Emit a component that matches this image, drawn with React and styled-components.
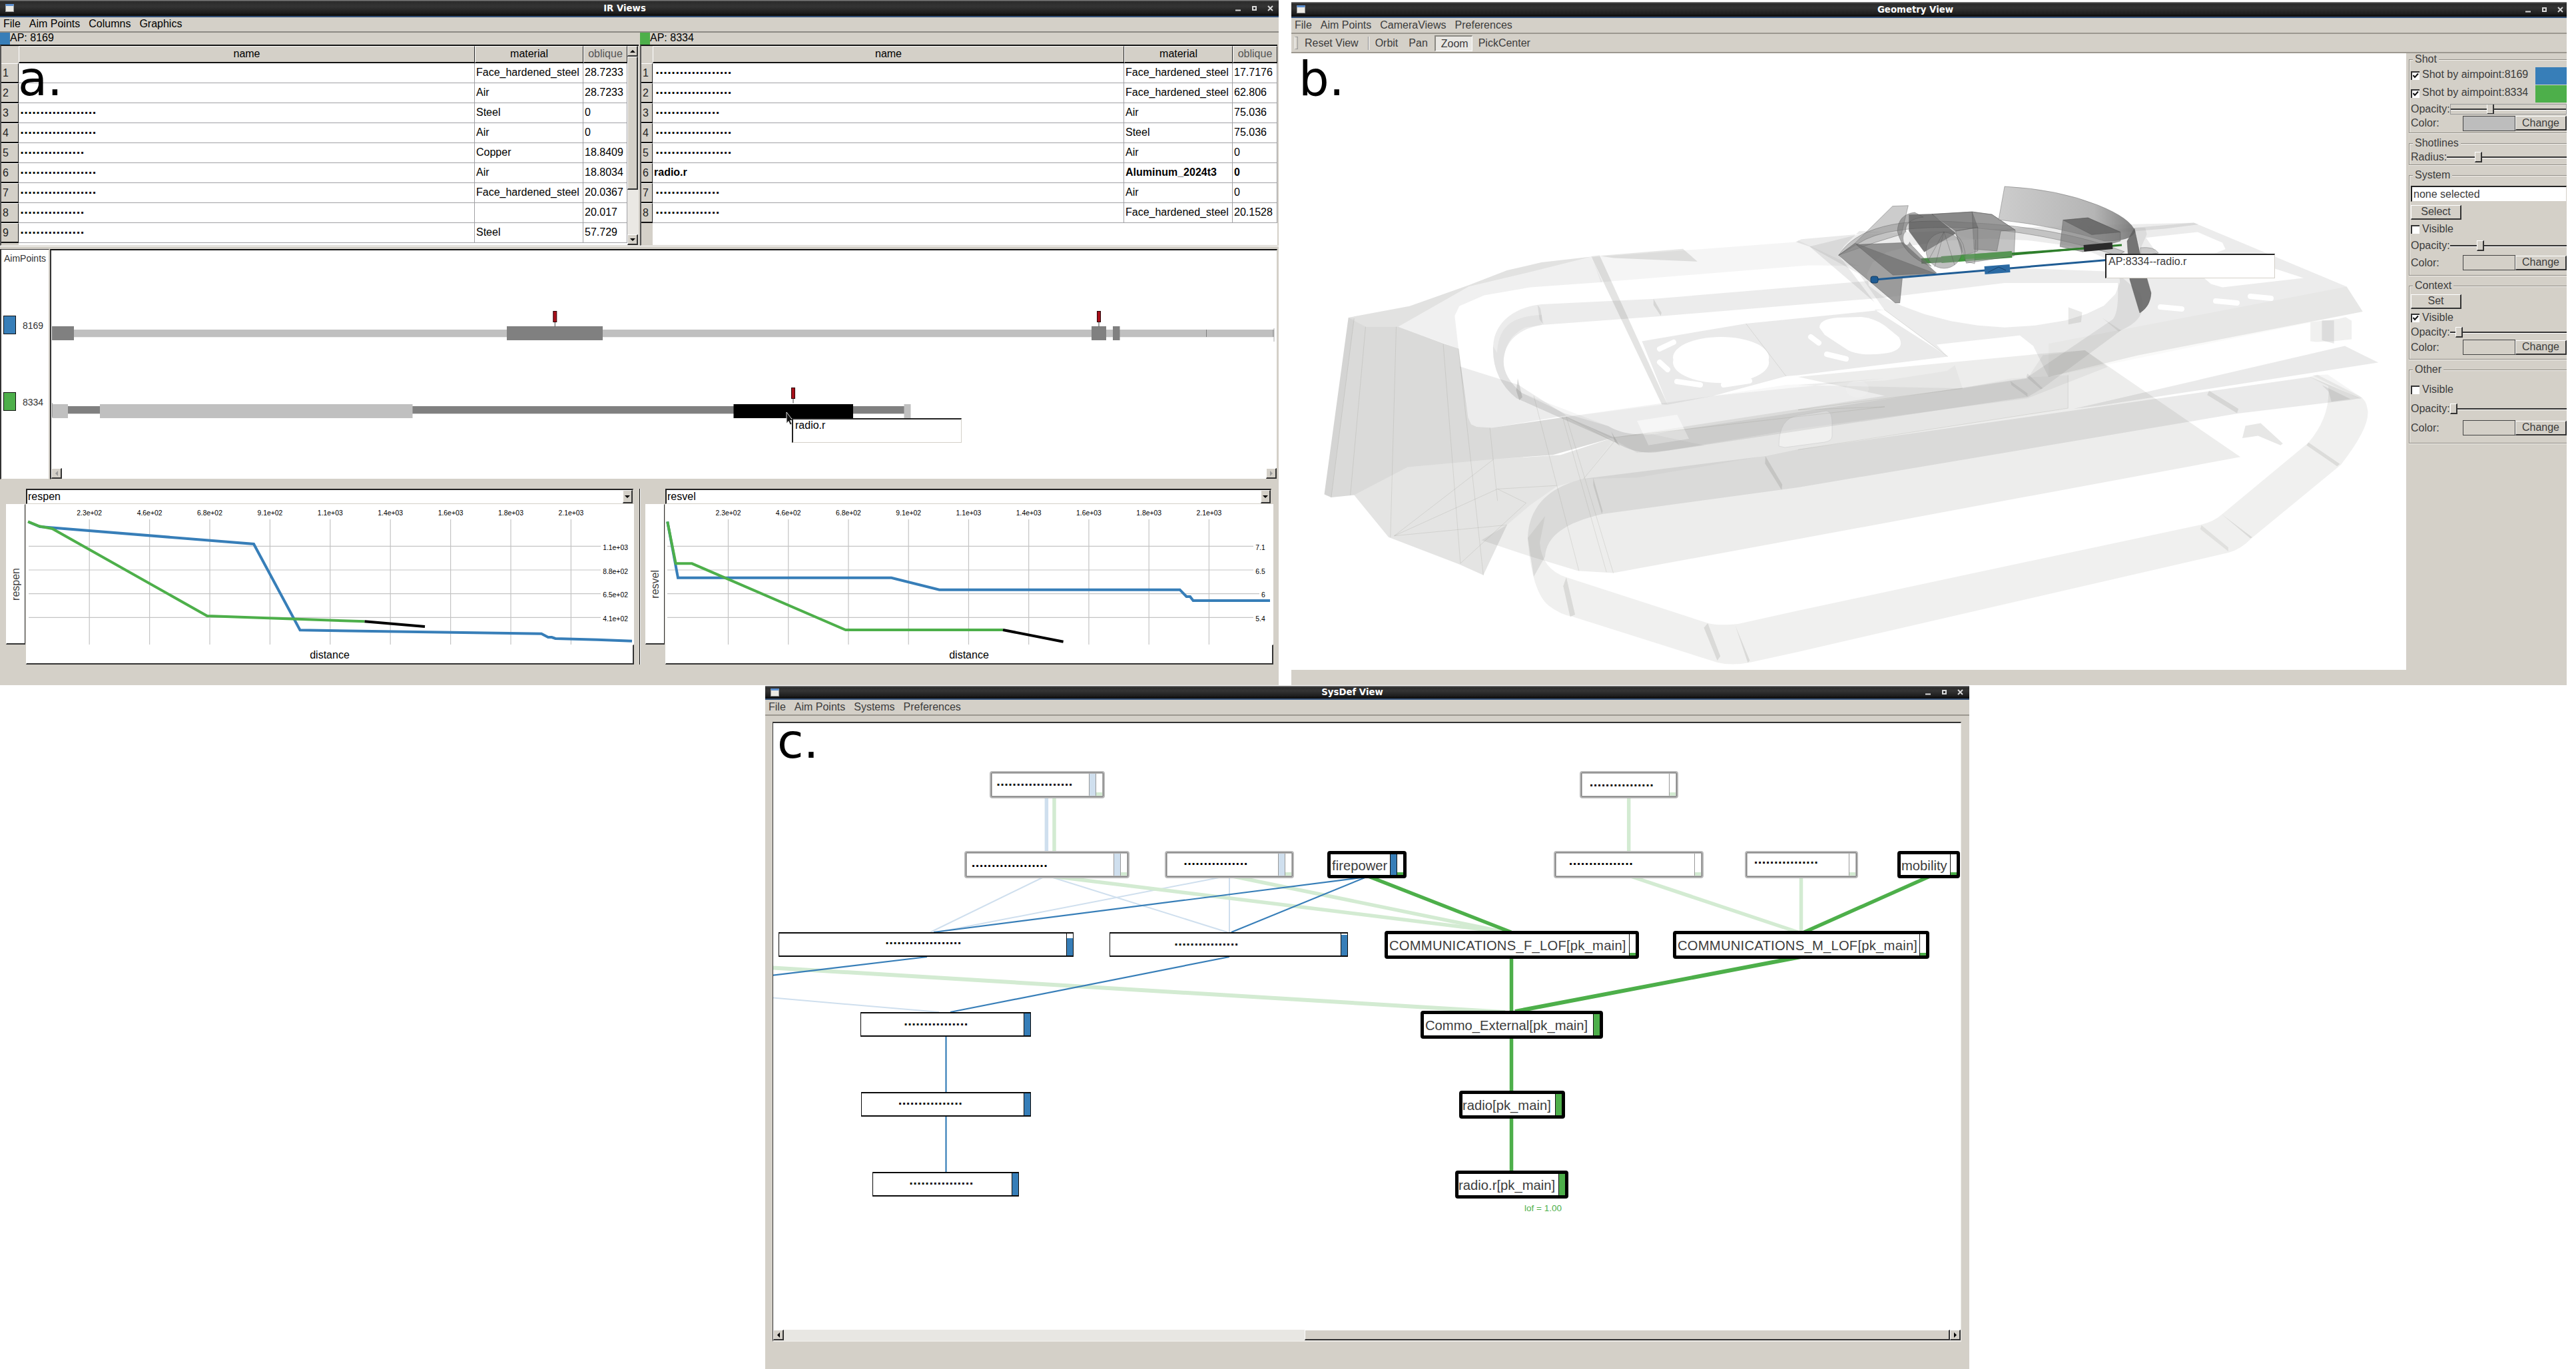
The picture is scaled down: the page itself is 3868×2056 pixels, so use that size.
import React from "react";
import styled, { createGlobalStyle, css } from "styled-components";

const BLUE = "#377eb8";
const GREEN = "#4daf4a";
const FACE = "#d4d0c8";
const SANS = '"Liberation Sans", Arial, sans-serif';
const DEJAVU = '"DejaVu Sans", sans-serif';

const Global = createGlobalStyle`
  *, *::before, *::after { box-sizing: border-box; }
  body { margin: 0; background: #fff; }
`;

const raised = css`
  border-style: solid;
  border-width: 1px 2px 2px 1px;
  border-color: #fff #333 #333 #fff;
`;
const sunken = css`
  border-style: solid;
  border-width: 2px 1px 1px 2px;
  border-color: #222 ${FACE} ${FACE} #222;
`;

/* ---------- window chrome ---------- */

const Desktop = styled.main`
  position: relative;
  width: 3868px;
  height: 2056px;
  overflow: hidden;
  background: #fff;
  font: 16px ${SANS};
  color: #000;
  white-space: nowrap;
`;

const Window = styled.section`
  position: absolute;
  left: ${(p) => p.$x}px;
  top: ${(p) => p.$y}px;
  width: ${(p) => p.$w}px;
  height: ${(p) => p.$h}px;
  display: flex;
  flex-direction: column;
  background: ${FACE};
  color: ${(p) => p.$ink || "#000"};
`;

const TitleBar = styled.header`
  flex: none;
  height: ${(p) => p.$h}px;
  display: grid;
  grid-template-columns: 1fr auto 1fr;
  align-items: center;
  padding: 0 ${(p) => p.$padRight}px 0 8px;
  background: linear-gradient(#777 0, #777 1px, #2b2b2b 2px, #343434 40%, #1c1c1c 84%, #111 88%);
  border-bottom: 2px solid #34527a;
  color: #fff;
  font: bold 13.3px ${DEJAVU};
`;

const TitleText = styled.span`
  margin-right: 44px;
`;

const AppIcon = styled.i`
  width: 13px;
  height: 12px;
  background: #eceae4;
  border: 1px solid #999;
  border-top: 3px solid #5b8fd0;
`;

const Controls = styled.div`
  display: flex;
  justify-content: flex-end;
  gap: 15px;
`;

const Glyph = ({ d }) => (
  <svg width="9" height="9" viewBox="0 0 9 9" fill="none" stroke="#d8d8d8" strokeWidth="2">
    <path d={d} />
  </svg>
);

const Title = ({ text, h = 26, padRight = 9 }) => (
  <TitleBar $h={h} $padRight={padRight}>
    <AppIcon />
    <TitleText>{text}</TitleText>
    <Controls>
      <Glyph d="M0 7.5H8" />
      <Glyph d="M2 2H7V7H2Z" />
      <Glyph d="M1 1L8 8M8 1L1 8" />
    </Controls>
  </TitleBar>
);

const MenuBar = styled.nav`
  flex: none;
  height: ${(p) => p.$h}px;
  display: flex;
  align-items: center;
  gap: 13px;
  padding: 0 0 ${(p) => p.$lift || 0}px 5px;
  border-bottom: 2px solid ${(p) => p.$line || "#8c8a84"};
`;

const Menu = ({ items, ...rest }) => (
  <MenuBar {...rest}>
    {items.map((m) => (
      <span key={m}>{m}</span>
    ))}
  </MenuBar>
);

const FigureLabel = styled.span`
  position: absolute;
  left: ${(p) => p.$x}px;
  top: ${(p) => p.$y}px;
  font: 72px/84px ${DEJAVU};
  color: #000;
`;

const Dots = styled.span`
  font: bold 16px/20px ${DEJAVU};
  letter-spacing: -0.05px;
  color: #000;
`;
const dots = (n) => ".".repeat(n);

/* ---------- IR Views: tables ---------- */

const Tables = styled.div`
  flex: none;
  height: 321px;
  display: grid;
  grid-template-columns: 959px 957px;
  grid-template-rows: minmax(0, 1fr);
  column-gap: 2px;
  border-bottom: 1px solid #fff;
`;

const TablePane = styled.div`
  display: flex;
  flex-direction: column;
  min-width: 0;
  min-height: 0;
`;

const ApLine = styled.div`
  flex: none;
  height: 18px;
  display: flex;
  line-height: 16px;
`;

const ApSwatch = styled.i`
  width: 15px;
  background: ${(p) => p.$c};
`;

const TableFrame = styled.div`
  flex: 1;
  min-height: 0;
  display: flex;
  overflow: hidden;
  background: #fff;
  border-top: 2px solid #111;
  border-left: 2px solid #555;
  border-bottom: 1px solid ${FACE};
`;

const Grid = styled.div`
  flex: 1;
  display: grid;
  align-content: start;
  grid-template-columns: ${(p) => p.$cols};
  grid-template-rows: 26px;
  grid-auto-rows: 30px;
`;

const HeadCell = styled.div`
  background: ${FACE};
  border: solid;
  border-width: 1px 1px 2px 1px;
  border-color: #fff #222 #111 #fff;
  text-align: center;
  line-height: 22px;
  color: ${(p) => (p.$dim ? "#555" : "#000")};
`;

const IndexCell = styled.div`
  background: ${FACE};
  border: solid;
  border-width: 1px 1px 2px 0;
  border-color: #fff #222 #111 #fff;
  line-height: 27px;
  padding-left: 2px;
  color: #222;
`;

const Cell = styled.div`
  border-right: 1px solid #a0a0a4;
  border-bottom: 1px solid #a0a0a4;
  padding-left: 2px;
  line-height: 27px;
  font-weight: ${(p) => (p.$bold ? "bold" : "normal")};
  overflow: hidden;

  ${Dots} {
    display: block;
    padding: 1px 0 0 ${(p) => p.$indent || 0}px;
  }
`;

const IndexFill = styled.div`
  background: ${FACE};
  height: ${(p) => p.$h || 26}px;
`;

const VScroll = styled.div`
  flex: none;
  width: 17px;
  display: flex;
  flex-direction: column;
  background: #eae8e4;
`;

const ScrollButton = styled.div`
  ${raised}
  flex: none;
  width: ${(p) => p.$w || 16}px;
  height: ${(p) => p.$h || 16}px;
  background: ${FACE};
  display: flex;
  align-items: center;
  justify-content: center;
`;

const VThumb = styled.div`
  ${raised}
  flex: none;
  height: 200px;
  width: 16px;
  background: ${FACE};
`;

const Spacer = styled.div`
  flex: 1;
`;

const ARROWS = {
  up: "M4 2L8 6H0Z",
  down: "M0 2H8L4 6Z",
  left: "M6 0V8L2 4Z",
  right: "M2 0V8L6 4Z",
};
const Arrow = ({ dir, color = "#000" }) => (
  <svg width="8" height="8" viewBox="0 0 8 8">
    <path d={ARROWS[dir]} fill={color} />
  </svg>
);

const LEFT_ROWS = [
  [0, "Face_hardened_steel", "28.7233"],
  [0, "Air", "28.7233"],
  [19, "Steel", "0"],
  [19, "Air", "0"],
  [16, "Copper", "18.8409"],
  [19, "Air", "18.8034"],
  [19, "Face_hardened_steel", "20.0367"],
  [16, "", "20.017"],
  [16, "Steel", "57.729"],
];
const RIGHT_ROWS = [
  [19, "Face_hardened_steel", "17.7176"],
  [19, "Face_hardened_steel", "62.806"],
  [16, "Air", "75.036"],
  [19, "Steel", "75.036"],
  [19, "Air", "0"],
  ["radio.r", "Aluminum_2024t3", "0"],
  [16, "Air", "0"],
  [16, "Face_hardened_steel", "20.1528"],
];

const ResultTable = ({ label, color, rows, cols, indent, scroll }) => (
  <TablePane>
    <ApLine>
      <ApSwatch $c={color} />
      <span>{label}</span>
    </ApLine>
    <TableFrame>
      <Grid $cols={cols}>
        <IndexFill />
        <HeadCell>name</HeadCell>
        <HeadCell>material</HeadCell>
        <HeadCell $dim>oblique</HeadCell>
        {rows.map(([name, material, oblique], i) => {
          const bold = typeof name === "string";
          return (
            <React.Fragment key={i}>
              <IndexCell>{i + 1}</IndexCell>
              <Cell $bold={bold} $indent={indent}>
                {bold ? name : name ? <Dots>{dots(name)}</Dots> : null}
              </Cell>
              <Cell $bold={bold}>{material}</Cell>
              <Cell $bold={bold}>{oblique}</Cell>
            </React.Fragment>
          );
        })}
        <IndexFill $h={60} />
      </Grid>
      {scroll && (
        <VScroll>
          <ScrollButton>
            <Arrow dir="up" />
          </ScrollButton>
          <VThumb />
          <Spacer />
          <ScrollButton>
            <Arrow dir="down" />
          </ScrollButton>
        </VScroll>
      )}
    </TableFrame>
  </TablePane>
);

/* ---------- IR Views: shotline tracks ---------- */

const TrackArea = styled.div`
  flex: none;
  height: 346px;
  margin-top: 4px;
  display: grid;
  grid-template-columns: 74px 1843px;
  grid-template-rows: minmax(0, 1fr);
  column-gap: 1px;
`;

const AimList = styled.div`
  background: #fff;
  border: solid;
  border-width: 1px 1px 1px 2px;
  border-color: #333 ${FACE} ${FACE} #333;
  display: flex;
  flex-direction: column;
  font-size: 14px;
  color: #333;
`;

const AimHeading = styled.div`
  padding: 5px 0 0 4px;
  height: 99px;
`;

const AimItem = styled.div`
  height: 115px;
  display: flex;
  gap: 10px;
  padding-left: 3px;
  line-height: 31px;
`;

const AimSwatch = styled.i`
  width: 19px;
  height: 28px;
  border: 1.5px solid #111;
  background: ${(p) => p.$c};
`;

const TrackPane = styled.div`
  position: relative;
  background: #fff;
  border: solid;
  border-width: 2px 1px 1px 2px;
  border-color: #111 ${FACE} ${FACE} #333;
  display: flex;
  flex-direction: column;
`;

const ScrollEnds = styled.div`
  display: flex;
  justify-content: space-between;
`;

const Tip = styled.div`
  ${sunken}
  position: absolute;
  left: ${(p) => p.$x}px;
  top: ${(p) => p.$y}px;
  width: 255px;
  height: 37px;
  padding-left: 3px;
  line-height: ${(p) => p.$lh}px;
  background: #fff;
`;

/* [x0, x1, fill, thick] */
const TRACK_8169 = [
  [111, 1912, "#c0c0c0", false],
  [78, 111, "#808080", true],
  [761, 905, "#808080", true],
  [1639, 1661, "#808080", true],
  [1671, 1681.5, "#808080", true],
];
const TRACK_8334 = [
  [102, 1358, "#808080", false],
  [78, 102, "#c0c0c0", true],
  [150, 619.5, "#c0c0c0", true],
  [1101.5, 1281, "#000", true],
  [1357.5, 1367.5, "#c0c0c0", true],
];

const Track = ({ segs, thin, thick }) =>
  segs.map(([a, b, c, t], i) => (
    <rect key={i} x={a} width={b - a} y={t ? thick : thin} height={t ? 21 : 11.3} fill={c} />
  ));

const Pin = ({ x, y }) => (
  <g>
    <path d={`M${x} ${y + 16}V${y + 23.5}`} stroke="#444" strokeWidth="1" />
    <rect x={x - 2.5} y={y + 0.5} width="5" height="16" fill="#a8101a" stroke="#2a0508" />
  </g>
);

const Tracks = () => (
  <svg width="1840" height="327" viewBox="77 376 1840 327">
    <Track segs={TRACK_8169} thin={495} thick={490} />
    <path d="M1811.5 495V506" stroke="#808080" />
    <path d="M1913 493V513" stroke="#c8c8c8" strokeWidth="1.5" />
    <path d="M1912 495V506" stroke="#808080" />
    <Track segs={TRACK_8334} thin={610} thick={607} />
    <path d="M78.5 605V626" stroke="#888" strokeWidth=".8" />
    <Pin x={833.3} y={467} />
    <Pin x={1650} y={467} />
    <Pin x={1191} y={582} />
    <path d="M1181 619V636L1184 632.5L1186.5 638L1189 636.8L1186.5 631.5H1190.5Z" fill="#111" stroke="#eee" strokeWidth=".9" />
  </svg>
);

/* ---------- IR Views: charts ---------- */

const Charts = styled.div`
  flex: 1;
  display: flex;
  padding: 14px 0 0 9px;
`;

const ChartBox = styled.div`
  display: grid;
  grid-template-columns: 30px 913px;
  grid-template-rows: 23px 211px 30px;
`;

const Divider = styled.i`
  width: 2px;
  height: 264px;
  margin: 0 7px 0 8px;
  background: #111;
  border-right: 1px solid #fff;
`;

const Combo = styled.div`
  ${sunken}
  grid-column: 2;
  display: flex;
  justify-content: space-between;
  margin-right: ${(p) => p.$inset || 1}px;
  padding-left: 1px;
  line-height: 19px;
  background: #fff;
`;

const YLabel = styled.div`
  ${raised}
  margin-right: 1px;
  border-right-width: 1px;
  display: flex;
  align-items: center;
  justify-content: center;
  background: #fff;
  color: #444;

  span {
    writing-mode: vertical-rl;
    transform: rotate(180deg);
    margin-top: 31px;
  }
`;

const XLabel = styled.div`
  ${raised}
  grid-column: 2;
  background: #fff;
  text-align: center;
  line-height: 29px;
`;

const Plot = styled.svg`
  display: block;
  width: 913px;
  height: 211px;
  background: #fff;
  font: 10.4px ${SANS};
`;

const X_TICKS = ["2.3e+02", "4.6e+02", "6.8e+02", "9.1e+02", "1.1e+03", "1.4e+03", "1.6e+03", "1.8e+03", "2.1e+03"];
const Y_LINES = [820.3, 856, 891.7, 927.3];

const CHARTS = [
  {
    name: "respen",
    left: 39,
    first: 134.2,
    step: 90.4,
    gridFrom: 43,
    labelRight: 943,
    yTicks: ["1.1e+03", "8.8e+02", "6.5e+02", "4.1e+02"],
    gridTo: [902, 902, 902, 902],
    blue: "43,784 60,791 381,817 450.5,946.3 813,951.7 823,957 828.5,957 834,959 897,960.7 949,962.8",
    green: "42,783.3 59,790.3 78.5,794 311,925 547.5,933.3",
    black: "547.5,933.3 638,941",
  },
  {
    name: "resvel",
    left: 998,
    first: 1092.5,
    step: 90.24,
    gridFrom: 1001,
    labelRight: 1898.7,
    yTicks: ["7.1", "6.5", "6", "5.4"],
    gridTo: [1881, 1881, 1890, 1881],
    blue: "1001.2,783.3 1017,867.7 1337.5,867.7 1409.4,885.7 1770.6,885.7 1780.6,896 1786,896 1790.6,902 1906,902",
    green: "1001.2,783.3 1013.7,846.3 1038,846.3 1268.7,946 1505,946",
    black: "1505,946 1595.6,963.7",
  },
];

const Chart = ({ c }) => (
  <ChartBox>
    <Combo $inset={c.left === 39 ? 1 : 3}>
      <span>{c.name}</span>
      <ScrollButton $w={15} $h={20}>
        <Arrow dir="down" />
      </ScrollButton>
    </Combo>
    <YLabel>
      <span>{c.name}</span>
    </YLabel>
    <Plot viewBox={`${c.left} 757 913 211`}>
      {X_TICKS.map((t, i) => {
        const x = c.first + i * c.step;
        return (
          <g key={t}>
            <path d={`M${x} 780V968`} stroke="#c4c4c4" strokeWidth="1.2" />
            <text x={x} y="774" textAnchor="middle">
              {t}
            </text>
          </g>
        );
      })}
      {c.yTicks.map((t, i) => (
        <g key={t}>
          <path d={`M${c.gridFrom} ${Y_LINES[i]}H${c.gridTo[i]}`} stroke="#c4c4c4" strokeWidth="1.2" />
          <text x={c.labelRight} y={Y_LINES[i] + 5.6} textAnchor="end">
            {t}
          </text>
        </g>
      ))}
      <g fill="none" strokeWidth="4">
        <polyline points={c.blue} stroke={BLUE} />
        <polyline points={c.green} stroke={GREEN} />
        <polyline points={c.black} stroke="#000" />
      </g>
    </Plot>
    <XLabel>distance</XLabel>
  </ChartBox>
);

const IRViews = () => (
  <Window $x={0} $y={0} $w={1920} $h={1029}>
    <Title text="IR Views" padRight={8} />
    <Menu $h={23} $lift={2} items={["File", "Aim Points", "Columns", "Graphics"]} />
    <Tables>
      <ResultTable label="AP: 8169" color={BLUE} rows={LEFT_ROWS} cols="26px 685px 163px 66px" indent={0} scroll />
      <ResultTable label="AP: 8334" color={GREEN} rows={RIGHT_ROWS} cols="17px 708px 163px 67px" indent={2} />
    </Tables>
    <TrackArea>
      <AimList>
        <AimHeading>AimPoints</AimHeading>
        <AimItem>
          <AimSwatch $c={BLUE} />
          8169
        </AimItem>
        <AimItem>
          <AimSwatch $c={GREEN} />
          8334
        </AimItem>
      </AimList>
      <TrackPane>
        <Tracks />
        <ScrollEnds>
          <ScrollButton>
            <Arrow dir="left" color="#999" />
          </ScrollButton>
          <ScrollButton>
            <Arrow dir="right" color="#999" />
          </ScrollButton>
        </ScrollEnds>
        <Tip $x={1112} $y={252} $lh={18}>
          radio.r
        </Tip>
      </TrackPane>
    </TrackArea>
    <Charts>
      <Chart c={CHARTS[0]} />
      <Divider />
      <Chart c={CHARTS[1]} />
    </Charts>
    <FigureLabel $x={27} $y={76}>
      a.
    </FigureLabel>
  </Window>
);

/* ---------- Geometry View ---------- */

const ToolBar = styled.div`
  flex: none;
  height: 29px;
  display: flex;
  align-items: center;
  padding-left: 5px;
  border-bottom: 2px solid #9c9890;
`;

const Grip = styled.i`
  width: 5px;
  height: 19px;
  margin-right: 10px;
  border: 1px solid #999;
  border-left-color: #fff;
`;

const ToolSep = styled.i`
  width: 2px;
  height: 20px;
  margin: 0 9px 0 14px;
  border-left: 1px solid #888;
  border-right: 1px solid #fff;
`;

const Tool = styled.span`
  margin-right: ${(p) => p.$gap}px;
`;

const PressedTool = styled.span`
  height: 24px;
  padding: 0 5px 0 8px;
  margin: 0 9px 0 10px;
  line-height: 22px;
  background: #e9e7e3;
  border: solid;
  border-width: 2px 1px 1px 2px;
  border-color: #8a8882 #fff #fff #8a8882;
`;

const GeoBody = styled.div`
  flex: none;
  height: 926px;
  display: grid;
  grid-template-columns: 1674px 241px;
  grid-template-rows: minmax(0, 1fr);
`;

const Viewport = styled.div`
  position: relative;
  background: #fff;
  overflow: hidden;
`;

const Scene = styled.svg`
  display: block;
`;

const scaler = (ox, sx, oy, sy) => (s) =>
  s
    .trim()
    .split(/\s+/)
    .map((q) => {
      const [x, y] = q.split(",").map(Number);
      return `${(ox + x * sx).toFixed(1)},${(oy + y * sy).toFixed(1)}`;
    })
    .join(" ") + " ";
const bow = scaler(1930, 0.574, 0, 0.6569);
const stern = scaler(2700, 0.574, 240, 0.4975);

const UPPER_HULL = [
  [bow("165,726 325,700 480,652 580,618 670,600 800,587 830,645 640,657 520,675 455,700 443,722 453,797 295,747 210,747"), 0.085],
  [bow("165,726 325,700 480,652 580,618 670,600 800,587 640,622 480,655 295,747 210,747"), 0.09],
  [bow("802,588 1340,553") + stern("0,243 106,300 160,320 0,318") + bow("1465,600 825,645"), 0.06],
  [bow("820,585 1040,569 1078,598 860,590"), 0.15],
  [bow("800,586 822,584 1000,925 985,925"), 0.16],
  [bow("1335,553 1350,547 1568,530") + stern("160,215 120,260 106,288 200,430 30,262"), 0.12],
];

const SIDE = [
  [bow("165,726 210,747 295,747 413,785 453,797 478,955 486,970 500,976 540,978 735,953 860,1000 700,1040 545,1050 320,1068 180,1132 120,1137 102,1130"), 0.215],
  [bow("457,838 610,880 735,950 540,978 500,976 486,970 478,955"), 0.11],
  [bow("165,726 180,728 120,1137 102,1132"), 0.04],
  [bow("180,1132 320,1068 545,1050 720,1040 860,1000 780,1095 710,1112 640,1155 580,1200 518,1315 455,1290 270,1228"), 0.155],
];

const LOWER = [
  [bow("513,1235 580,1200 640,1155 710,1112 780,1095 860,1000 1568,905") + stern("0,655 640,585 750,575 1157,897 0,1145") + bow("858,1310 765,1305 640,1272"), 0.105],
  [bow("735,953 990,925 1120,905 1310,880 1568,870") + stern("390,637 410,620 430,690 555,660 706,650 706,750 0,875") + bow("1250,1043 920,1092 780,1095 860,1000"), 0.04],
  [bow("735,953 1120,905 1568,865") + stern("0,680 430,690 600,660 640,590 750,575 810,625 600,720 0,812") + bow("1000,1030 920,1035 860,1005"), 0.07],
];

const DECKS = [
  "M" + bow("933,780 1205,740 1568,708") + stern("200,452 392,594 0,650") + bow("1568,842 1310,860 1120,905 1000,925") + "Z M" + bow("1015,823") + "a72 31 0 1 0 143 0 a72 31 0 1 0 -143 0Z",
];

/* slots: [x1,y1,x2,y2] in page units */
const SLOTS = [
  [2492, 524, 2513, 514],
  [2492, 544, 2504, 555],
  [2518, 573, 2553, 578],
  [2588, 578, 2627, 572],
  [2719, 506, 2731, 515],
  [2743, 532, 2772, 539],
  [3244, 461, 3276, 464],
  [3327, 452, 3359, 455],
  [3379, 445, 3410, 448],
];

const HULL_LINES = [
  bow("180,728 120,1137"),
  bow("210,747 170,1132"),
  bow("290,747 275,1228"),
  bow("413,787 458,1288"),
  bow("453,797 518,1315"),
  bow("650,905 768,1305"),
  bow("735,953 858,1310"),
  bow("725,953 840,1308"),
  bow("285,1225 545,1050"),
  bow("285,1225 555,1118 710,1110"),
  bow("285,1225 580,1200"),
  bow("458,1288 630,1150 555,1118"),
  bow("535,978 555,1145"),
  bow("735,953 860,1010 780,1095"),
  bow("1205,740 1310,860"),
  stern("225,452 392,594"),
  stern("706,650 706,750 0,875"),
  bow("860,1000 1568,930") + stern("0,755 430,690"),
];

const Vehicle = () => (
  <Scene width="1674" height="926" viewBox="1939 80 1674 926">
    <defs>
      <linearGradient id="shield" x1="0" x2="1">
        <stop offset="0" stopColor="#c4c4c4" />
        <stop offset=".7" stopColor="#a8a8a8" />
        <stop offset="1" stopColor="#686868" />
      </linearGradient>
    </defs>

    {/* hull plates */}
    <g fill="#54544f">
      {[...UPPER_HULL, ...SIDE, ...LOWER].map(([pts, o], i) => (
        <polygon key={i} points={pts} fillOpacity={o} />
      ))}
      {DECKS.map((d) => (
        <path key={d} d={d} fillOpacity=".12" fillRule="evenodd" />
      ))}
      <path
        fillRule="evenodd"
        fillOpacity=".11"
        d={
          "M" + stern("30,262 160,225 690,200 1035,190 1435,383 1477,458 890,590 655,655 615,562 580,530 362,558 390,594 225,452 160,345") +
          "Z M" + stern("185,380 225,415 270,440 330,466 400,487 470,500 540,506 620,500 700,485 755,465 800,440 830,405 842,370 838,335 815,305 780,285 740,268 700,258 600,243 500,238 400,243 300,258 230,280 195,310 180,345") +
          "Z M" + stern("910,235 1045,218 1110,250 1118,270 1090,282 940,285") +
          "Z M" + stern("1050,345 1230,322 1322,357 1110,385 1080,375") + "Z"
        }
      />
      <polygon points={stern("655,555 1435,383 1477,458 655,655")} fillOpacity=".03" />
      <polygon points={stern("830,210 1035,190 1048,195 960,208 830,220")} fillOpacity=".12" />
      <polygon points={stern("720,752 1430,562 1518,612 790,742")} fillOpacity=".12" />
      <polygon points={stern("707,445 743,460 740,490 707,497")} fillOpacity=".13" />
      <polygon points={stern("1340,490 1415,480 1432,475 1448,486 1448,542 1400,548 1355,550 1340,548")} fillOpacity=".09" />
      <polygon points={stern("1370,485 1402,485 1402,555 1370,545")} fillOpacity=".12" />
      <polygon points={stern("1162,840 1170,803 1210,795 1268,856 1262,862 1203,833")} fillOpacity=".14" />
    </g>

    {/* hatch openings */}
    <g fill="#fff" stroke="#fff">
      <path d="M2732 492 Q2732 479 2760 477 L2795 476 Q2815 478 2830 489 L2851 506 Q2862 524 2835 530 Q2795 536 2775 526 L2740 503Z" stroke="none" />
      {SLOTS.map(([a, b, c, d]) => (
        <path key={a + "-" + b} d={`M${a} ${b}L${c} ${d}`} strokeWidth="8" strokeLinecap="round" />
      ))}
      <polygon points={bow("920,962 1025,948 1056,1003 950,1018")} fillOpacity=".55" stroke="none" />
      <path d="M2671 670 Q2671 628 2700 624 L2742 617 Q2751 617 2751 635 V655 Q2751 662 2740 664 L2680 672Z" fillOpacity=".4" stroke="#ccc" strokeWidth=".6" />
      <ellipse cx="2789" cy="584" rx="17" ry="13" fillOpacity=".15" stroke="none" />
    </g>

    {/* upper running gear */}
    <g fill="#54544f">
      <path
        fillRule="evenodd"
        fillOpacity=".11"
        d="M2242 520 C2244 480 2280 460 2315 457 L2481 449 L2830 420 L3010 402 L3176 408 L3214 440 L3217 452 Q3222 480 3185 496 L3067 583 L3045 596 L2495 678 Q2460 685 2425 664 L2277 598 Q2240 568 2242 520Z M2258 538 C2262 505 2290 492 2315 488 L2492 475 L2830 447 L3010 425 L3180 425 Q3182 470 3172 480 L3042 568 L2480 652 Q2440 655 2415 640 L2350 621 L2285 590 Q2255 565 2258 538Z"
      />
      <path d="M2242 520 Q2240 568 2277 598 L2425 664 Q2460 685 2495 678 L2560 669 L2480 652 Q2440 655 2415 640 L2285 590 Q2255 565 2258 538 Q2262 505 2290 492 L2315 488 L2315 473 C2270 475 2250 490 2248 530Z" fillOpacity=".06" />
      <polygon points={bow("660,697 667,705 675,742 665,730")} fillOpacity=".12" />
      <polygon points={bow("963,683 984,715 982,722 963,697")} fillOpacity=".14" />
      <polygon points={bow("608,865 620,908 612,915 604,893")} fillOpacity=".2" />
      <polygon points={bow("853,987 875,1020 862,1010")} fillOpacity=".2" />
    </g>

    {/* lower running gear */}
    <g fill="#54544f">
      <path
        fillOpacity=".12"
        d="M2294 808 C2296 750 2340 728 2378 719 L2650 685 L2700 675 L3314 588 L3469 566 L3544 598 L3527 601 L3360 621 L2700 732 L2406 772 C2350 785 2322 805 2320 836 L2303 866Z"
      />
      <path
        fillRule="evenodd"
        fillOpacity=".09"
        d="M2294 808 Q2300 890 2326 910 Q2345 924 2361 926 L2579 995 Q2600 1000 2627 995 L2700 979 L3346 830 Q3365 825 3380 809 L3515 698 Q3560 640 3555 615 Q3553 600 3543 595 L3480 563 L3468 566 L3496 580 Q3500 625 3466 665 L3337 772 Q3325 783 3305 788 L2700 917 L2610 937 Q2580 940 2565 936 L2352 867 Q2315 855 2312 815 L2320 775Z"
      />
      <polygon points={bow("805,1092 830,1168 828,1175 806,1110")} fillOpacity=".16" />
      <polygon points={bow("1256,1043 1300,1108 1298,1120 1255,1060")} fillOpacity=".16" />
      <polygon points={bow("735,1320 758,1405 745,1410 727,1340")} fillOpacity=".14" />
      <polygon points={bow("1105,1425 1138,1500 1130,1510 1095,1435")} fillOpacity=".14" />
      <polygon points={bow("1177,1430 1215,1510 1210,1515")} fillOpacity=".14" />
      <polygon points={stern("1075,697 1152,752 1148,765 1070,710")} fillOpacity=".13" />
      <polygon points={stern("1335,853 1417,918 1410,925 1330,862")} fillOpacity=".13" />
      <polygon points={stern("1108,1070 1188,1140 1183,1143")} fillOpacity=".14" />
      <polygon points={stern("1055,1103 1125,1170 1125,1182 1052,1115")} fillOpacity=".1" />
      <polygon points={stern("1345,650 1385,648 1475,718 1470,722")} fillOpacity=".06" />
      <polygon points={stern("1370,680 1445,722 1395,730 1388,700")} fillOpacity=".12" />
      <polygon points={stern("600,645 640,690 635,693 597,655")} fillOpacity=".12" />
      <polygon points={stern("555,668 600,705 600,715 558,680")} fillOpacity=".12" />
      <polygon points={stern("795,477 845,515 838,518")} fillOpacity=".1" />
    </g>
    <g fill="none" stroke="#8a8a84" strokeOpacity=".2" strokeWidth="1">
      {HULL_LINES.map((p, i) => (
        <polyline key={i} points={p} />
      ))}
    </g>

    {/* shotlines inside the turret */}
    <path d="M2887 394L3186 368" stroke="#2f7f2c" strokeWidth="3" />
    <path d="M2915 390L3021 382" stroke="#3f9a3c" strokeWidth="10" />
    <path d="M2885 392L2918 390" stroke="#4b8f48" strokeWidth="8" />

    {/* turret */}
    <g stroke="#555" strokeOpacity=".4" strokeWidth="1" strokeLinejoin="round">
      <polygon points={stern("106,288 150,250 247,140 288,138 270,225 200,250")} fill="#999" fillOpacity=".5" />
      <path d={"M" + stern("106,288") + "Q2800 322 2950 334 Q3090 340 3190 378 L3180 384 Q3060 346 2950 342 Q2830 338 2790 366Z"} fill="#777" fillOpacity=".35" />
      <polygon points={stern("106,288 150,252 360,344 273,352 266,432 254,432")} fill="#7c7c7c" fillOpacity=".72" />
      <polygon points={stern("152,256 275,250 362,342 248,348")} fill="#6c6c6c" fillOpacity=".7" />
      <polygon points={stern("290,166 350,164 412,222 330,278 290,215")} fill="#4e4e4e" fillOpacity=".75" />
      <polygon points={stern("350,164 455,157 507,165 568,212 565,290 440,312 412,222")} fill="#8a8a8a" fillOpacity=".5" />
      <polygon points={stern("350,164 455,157 470,205 412,215")} fill="#5a5a5a" fillOpacity=".55" />
      <polygon points={stern("455,157 507,165 568,212 530,215 520,275 460,270")} fill="#6a6a6a" fillOpacity=".45" />
      <polygon points={stern("412,215 470,203 470,275 430,290")} fill="#777" fillOpacity=".35" />
      <path d={"M" + stern("260,215") + "Q2850 322 2875 319 L2888 326 Q2858 330 2862 350 Q2866 366 2875 373 L2900 400 Q2858 385 2849 347Z"} fill="#707070" fillOpacity=".55" />
      <ellipse cx="2863" cy="358" rx="5" ry="10" fill="#eee" stroke="none" />
      <ellipse cx="2919" cy="376" rx="27" ry="27" fill="#8c8c8c" fillOpacity=".55" />
      <path d="M2936 352 Q2952 362 2951 392 L2965 396 L2966 360" fill="#aaa" fillOpacity=".35" />
      <path d="M2919 348L2905 401M2919 348L2895 392M2919 348L2935 398" fill="none" />
      <path d="M3010 280 Q3090 284 3150 308 Q3200 328 3206 348 Q3200 362 3160 362 Q3090 340 3001 330Z" fill="url(#shield)" fillOpacity=".85" />
      <polygon points={stern("693,182 758,175 843,218 843,245 745,278 685,262")} fill="#777" fillOpacity=".65" />
      <polygon points={stern("693,182 758,175 843,218 768,226")} fill="#5a5a5a" fillOpacity=".6" />
      <path d="M3205 343 L3214 384 L3230 440 Q3229 460 3213 470 L3198 420 L3194 362Z" fill="#5f5f5f" fillOpacity=".85" />
      <path d="M3214 372 Q3235 370 3241 380 L3214 384Z" fill="#999" fillOpacity=".4" />
      <polygon points={stern("880,205 908,205 912,225 895,270")} fill="#aaa" fillOpacity=".25" stroke="none" />
    </g>

    {/* shotlines outside the turret */}
    <path d="M2945 386L3021 381" stroke="#4c9a49" strokeOpacity=".6" strokeWidth="7" />
    <path d="M3021 381L3130 373" stroke="#2f7f2c" strokeWidth="3" />
    <path d="M3129 373L3172 369" stroke="#2b2b2b" strokeWidth="10" />
    <path d="M2815 420L3170 390" stroke="#1f5c94" strokeWidth="3" />
    <path d="M2980 406L3018 403" stroke="#2b6aa3" strokeWidth="12" />
    <path d="M2985 409L3001 401L3012 406" stroke="#16406b" strokeWidth="1" fill="none" />
    <rect x="2809" y="415" width="11" height="10" rx="3" fill="#1f5c94" stroke="#123c63" />
  </Scene>
);

const SidePanel = styled.aside`
  display: flex;
  flex-direction: column;
  gap: 15px;
  padding: 9px 0 0 4px;
  overflow: hidden;
`;

const Group = styled.div`
  flex: none;
  height: ${(p) => p.$h}px;
  display: flex;
  flex-direction: column;
  padding-left: 2px;
  border: 1px solid #8f8c85;
  border-right: 0;
  box-shadow: inset 1px 1px 0 #f4f2ee, 0 1px 0 #f4f2ee;
`;

const Legend = styled.span`
  align-self: flex-start;
  height: 18px;
  line-height: 18px;
  margin: -10px 0 ${(p) => p.$after || 0}px 3px;
  padding: 0 3px;
  background: ${FACE};
`;

const Row = styled.div`
  flex: none;
  height: ${(p) => p.$h}px;
  display: flex;
  align-items: center;
`;

const CheckText = styled.span`
  padding-bottom: ${(p) => p.$lift || 0}px;
`;

const Check = styled.i`
  display: flex;
  width: 13px;
  height: 13px;
  margin-right: 4px;
  background: #fff;
  border-top: 2px solid #333;
  border-left: 2px solid #333;
`;

const CheckBox = ({ on }) => (
  <Check>
    {on && (
      <svg width="11" height="11" viewBox="0 0 11 11" fill="none" stroke="#111" strokeWidth="2">
        <path d="M1.5 4L4 7L9 1.5" />
      </svg>
    )}
  </Check>
);

const ShotSwatch = styled.i`
  width: 47px;
  height: 26px;
  margin-left: auto;
  background: ${(p) => p.$c};
`;

const SliderBox = styled.span`
  flex: 1;
  height: 16px;
  display: flex;
  align-items: center;
  outline: ${(p) => (p.$focus ? "1px solid #999" : "none")};
  outline-offset: -1px;
`;

const Rail = styled.i`
  height: 2px;
  background: #333;
  box-shadow: 0 1px 0 #fff;
  flex: ${(p) => (p.$w === undefined ? "1" : `0 0 ${p.$w}px`)};
`;

const Knob = styled.i`
  ${raised}
  width: 11px;
  height: 16px;
  background: ${FACE};
`;

const Slider = ({ at, focus }) => (
  <SliderBox $focus={focus}>
    <Rail $w={at} />
    <Knob />
    <Rail />
  </SliderBox>
);

const ColorName = styled.span`
  width: 78px;
`;

const ColorSwatch = styled.i`
  width: 79px;
  height: 23px;
  border: 1px solid #444;
  background: ${(p) => p.$c || FACE};
`;

const PushButton = styled.button`
  ${raised}
  height: 22px;
  width: ${(p) => p.$w}px;
  padding: 0;
  background: ${FACE};
  color: inherit;
  font: 16px/18px ${SANS};
`;

const Field = styled.div`
  ${sunken}
  flex: 1;
  height: 24px;
  line-height: 21px;
  padding-left: 2px;
  background: #fff;
`;

const ColorRow = ({ h, c }) => (
  <Row $h={h}>
    <ColorName>Color:</ColorName>
    <ColorSwatch $c={c} />
    <PushButton $w={77}>Change</PushButton>
  </Row>
);

const GeometryView = () => (
  <Window $x={1939} $y={3} $w={1915} $h={1026} $ink="#3c3c3c">
    <Title text="Geometry View" h={24} padRight={5} />
    <Menu $h={24} $line="#9c9890" items={["File", "Aim Points", "CameraViews", "Preferences"]} />
    <ToolBar>
      <Grip />
      <Tool>Reset View</Tool>
      <ToolSep />
      <Tool $gap={16}>Orbit</Tool>
      <Tool>Pan</Tool>
      <PressedTool>Zoom</PressedTool>
      <Tool>PickCenter</Tool>
    </ToolBar>
    <GeoBody>
      <Viewport>
        <Vehicle />
        <Tip $x={1222} $y={301} $lh={20}>
          AP:8334--radio.r
        </Tip>
      </Viewport>
      <SidePanel>
        <Group $h={111}>
          <Legend $after={2}>Shot</Legend>
          <Row $h={27}>
            <CheckBox on />
            <CheckText $lift={3}>Shot by aimpoint:8169</CheckText>
            <ShotSwatch $c={BLUE} />
          </Row>
          <Row $h={27}>
            <CheckBox on />
            <CheckText $lift={3}>Shot by aimpoint:8334</CheckText>
            <ShotSwatch $c={GREEN} />
          </Row>
          <Row $h={19}>
            Opacity:
            <Slider at={55} focus />
          </Row>
          <ColorRow h={24} c="#bdbdbd" />
        </Group>
        <Group $h={33}>
          <Legend>Shotlines</Legend>
          <Row $h={23}>
            Radius:
            <Slider at={42} />
          </Row>
        </Group>
        <Group $h={151}>
          <Legend $after={7}>System</Legend>
          <Row $h={24}>
            <Field>none selected</Field>
          </Row>
          <Row $h={31}>
            <PushButton $w={76}>Select</PushButton>
          </Row>
          <Row $h={21}>
            <CheckBox />
            <CheckText $lift={1}>Visible</CheckText>
          </Row>
          <Row $h={28}>
            Opacity:
            <Slider at={40} />
          </Row>
          <ColorRow h={23} />
        </Group>
        <Group $h={111}>
          <Legend>Context</Legend>
          <Row $h={29}>
            <PushButton $w={76}>Set</PushButton>
          </Row>
          <Row $h={20}>
            <CheckBox on />
            <CheckText $lift={1}>Visible</CheckText>
          </Row>
          <Row $h={23}>
            Opacity:
            <Slider at={8} />
          </Row>
          <ColorRow h={23} />
        </Group>
        <Group $h={111}>
          <Legend $after={5}>Other</Legend>
          <Row $h={32}>
            <CheckBox />
            <CheckText $lift={1}>Visible</CheckText>
          </Row>
          <Row $h={25}>
            Opacity:
            <Slider at={0} />
          </Row>
          <ColorRow h={33} />
        </Group>
      </SidePanel>
    </GeoBody>
    <FigureLabel $x={11} $y={73}>
      b.
    </FigureLabel>
  </Window>
);

/* ---------- SysDef View ---------- */

const SysBody = styled.div`
  margin: 9px 12px 0 11px;
  height: 931px;
  display: flex;
  flex-direction: column;
  background: #fff;
  border: solid;
  border-width: 2px 1px 2px 1px;
  border-color: #333 #eceae6 #eceae6 #333;
`;

const Canvas = styled.div`
  position: relative;
  flex: none;
  height: 911px;
  overflow: hidden;
`;

const EdgeLayer = styled.svg`
  display: block;
`;

const HScroll = styled.div`
  display: flex;
  background: #e8e7e3;
`;

const HThumb = styled.div`
  ${raised}
  flex: none;
  width: 969px;
  height: 16px;
  background: ${FACE};
`;

const OX = 1161;
const OY = 1086;

const Node = styled.div`
  position: absolute;
  left: ${(p) => p.$x - OX}px;
  top: ${(p) => p.$y - OY}px;
  width: ${(p) => p.$w}px;
  height: ${(p) => p.$h}px;
  display: flex;
  align-items: center;
  background: #fff;
  ${(p) =>
    p.$kind === "active"
      ? css`
          border: 5px solid #000;
          border-radius: 4px;
        `
      : p.$kind === "faded"
      ? css`
          border: 4px solid #b8b8b8;
          border-radius: 4px;
          outline: 1.5px solid #7d7d7d;
          outline-offset: -3px;
        `
      : css`
          border: 2px solid #0a0a0a;
          border-left-width: 1px;
          border-right-width: 1px;
        `}
`;

const NodeLabel = styled.span`
  flex: 1;
  min-width: 0;
  padding-left: ${(p) => p.$pad}px;
  margin-top: ${(p) => p.$shift}px;
  font-size: 20.2px;
  line-height: 24px;
  letter-spacing: ${(p) => (p.$wide ? 0.25 : 0.03)}px;
`;

const Meter = styled.i`
  flex: none;
  align-self: stretch;
  width: 10px;
  border-left: 1px solid ${(p) => (p.$faded ? "#999" : "#111")};
  background: linear-gradient(to top, ${(p) => p.$c} ${(p) => p.$v * 100}%, #fff 0);
`;

const FB = "#cfdfee";
const FG = "#d3ebd2";

/* x, y, w, h, kind, label (dot count or text), label x, dot centre y, meters */
const NODES = [
  [1485.5, 1158, 173, 40.5, "faded", 19, 1496, 1178, [[FB, 1], [FG, 0.14]]],
  [1448, 1278, 248, 41, "faded", 19, 1458.5, 1299.6, [[FB, 1], [FG, 0.16]]],
  [1749, 1278, 194, 41, "faded", 16, 1777, 1297, [[FB, 1], [FG, 0.16]]],
  [2371.7, 1158, 148.5, 40.5, "faded", 16, 2386.5, 1179.3, [[FG, 0.14]]],
  [2333.4, 1278, 225, 41, "faded", 16, 2355.5, 1296.8, [[FG, 0.16]]],
  [2619.5, 1278, 170, 41, "faded", 16, 2633.5, 1295.4, [[FG, 0.16]]],
  [1992.5, 1278, 119, 41, "active", "firepower", 2000, 0, [[BLUE, 1], [GREEN, 0.12]]],
  [2849, 1278, 94, 41, "active", "mobility", 2855, 0, [[GREEN, 0.12]]],
  [2079, 1397.5, 381.5, 42, "active", "COMMUNICATIONS_F_LOF[pk_main]", 2086, 0, [[GREEN, 0.12]]],
  [2512, 1397.5, 385, 42, "active", "COMMUNICATIONS_M_LOF[pk_main]", 2519, 0, [[GREEN, 0.12]]],
  [2132.5, 1517.5, 274, 42, "active", "Commo_External[pk_main]", 2140, 0, [[GREEN, 1]]],
  [2190.5, 1637.5, 159, 42, "active", "radio[pk_main]", 2196, 0, [[GREEN, 1]]],
  [2184.7, 1757.7, 170.6, 42, "active", "radio.r[pk_main]", 2190, 0, [[GREEN, 1]]],
  [1168.5, 1399.5, 443, 37.5, "plain", 19, 1329, 1415.7, [[BLUE, 0.8]]],
  [1666, 1399.5, 358, 37.5, "plain", 16, 1763, 1417.6, [[BLUE, 0.94]]],
  [1292, 1520, 256, 37, "plain", 16, 1357, 1537.5, [[BLUE, 1]]],
  [1293, 1640, 254.5, 37, "plain", 16, 1348.5, 1656.7, [[BLUE, 1]]],
  [1309.5, 1759.7, 220.5, 37, "plain", 16, 1365, 1777, [[BLUE, 1]]],
];

const BORDER = { active: 5, faded: 4, plain: 1 };

/* x1, y1, x2, y2, colour, width */
const EDGES = [
  [1571.5, 1315, 1397, 1400, FB, 2],
  [1571.5, 1315, 1843, 1400, FB, 2],
  [1846, 1315, 1408, 1400, FB, 2],
  [1846, 1315, 1846, 1400, FB, 2],
  [1161, 1498.6, 1410, 1520, FB, 2],
  [1571.5, 1315, 2260, 1400, FG, 5.5],
  [1846, 1315, 2260, 1400, FG, 5.5],
  [1161, 1453.5, 2260, 1520, FG, 6],
  [2445.5, 1315, 2700, 1400, FG, 5.5],
  [2704.5, 1315, 2704.5, 1400, FG, 5.5],
  [2052, 1317, 1402, 1400, BLUE, 2.2],
  [2052, 1317, 1849, 1400, BLUE, 2.2],
  [1392, 1437, 1161, 1464.6, BLUE, 2.2],
  [1846, 1437, 1427, 1520, BLUE, 2.2],
  [1420.5, 1555, 1420.5, 1641, BLUE, 2.2],
  [1420.5, 1675, 1420.5, 1761, BLUE, 2.2],
  [2052, 1315, 2269, 1400, GREEN, 5.5],
  [2900, 1315, 2709, 1400, GREEN, 5.5],
  [2704, 1437, 2275, 1519, GREEN, 6],
  [2269.5, 1437, 2269.5, 1519, GREEN, 5.5],
  [2269.5, 1557, 2269.5, 1640, GREEN, 5.5],
  [2269.5, 1677, 2269.5, 1760, GREEN, 5.5],
  [1571.4, 1196, 1571.4, 1283, FB, 5.5],
  [1583, 1196, 1583, 1283, FG, 5.5],
  [2445.7, 1196, 2445.7, 1283, FG, 5.5],
];

const Footnote = styled.span`
  position: absolute;
  left: ${2289 - OX}px;
  top: ${1807 - OY}px;
  font-size: 13.5px;
  line-height: 16px;
  color: ${GREEN};
`;

const SysDefView = () => (
  <Window $x={1149} $y={1030} $w={1808} $h={1026} $ink="#3c3c3c">
    <Title text="SysDef View" h={21} padRight={9} />
    <Menu $h={24} $line="#9c9890" items={["File", "Aim Points", "Systems", "Preferences"]} />
    <SysBody>
      <Canvas>
        <EdgeLayer width="1783" height="911" viewBox={`${OX} ${OY} 1783 911`}>
          {EDGES.map(([a, b, c, d, s, w], i) => (
            <line key={i} x1={a} y1={b} x2={c} y2={d} stroke={s} strokeWidth={w} />
          ))}
        </EdgeLayer>
        {NODES.map(([x, y, w, h, kind, label, lx, cy, meters]) => {
          const isDots = typeof label === "number";
          return (
            <Node key={x} $x={x} $y={y} $w={w} $h={h} $kind={kind}>
              <NodeLabel
                $pad={lx - x - BORDER[kind]}
                $shift={isDots ? 2 * (cy - 5 - y - h / 2) : 3}
                $wide={label.length > 25}
              >
                {isDots ? <Dots>{dots(label)}</Dots> : label}
              </NodeLabel>
              {meters.map(([c, v]) => (
                <Meter key={c} $c={c} $v={v} $faded={kind === "faded"} />
              ))}
            </Node>
          );
        })}
        <Footnote>lof = 1.00</Footnote>
      </Canvas>
      <HScroll>
        <ScrollButton>
          <Arrow dir="left" />
        </ScrollButton>
        <Spacer />
        <HThumb />
        <ScrollButton>
          <Arrow dir="right" />
        </ScrollButton>
      </HScroll>
    </SysBody>
    <FigureLabel $x={18} $y={41}>
      c.
    </FigureLabel>
  </Window>
);

export default function App() {
  return (
    <>
      <Global />
      <Desktop>
        <IRViews />
        <GeometryView />
        <SysDefView />
      </Desktop>
    </>
  );
}
